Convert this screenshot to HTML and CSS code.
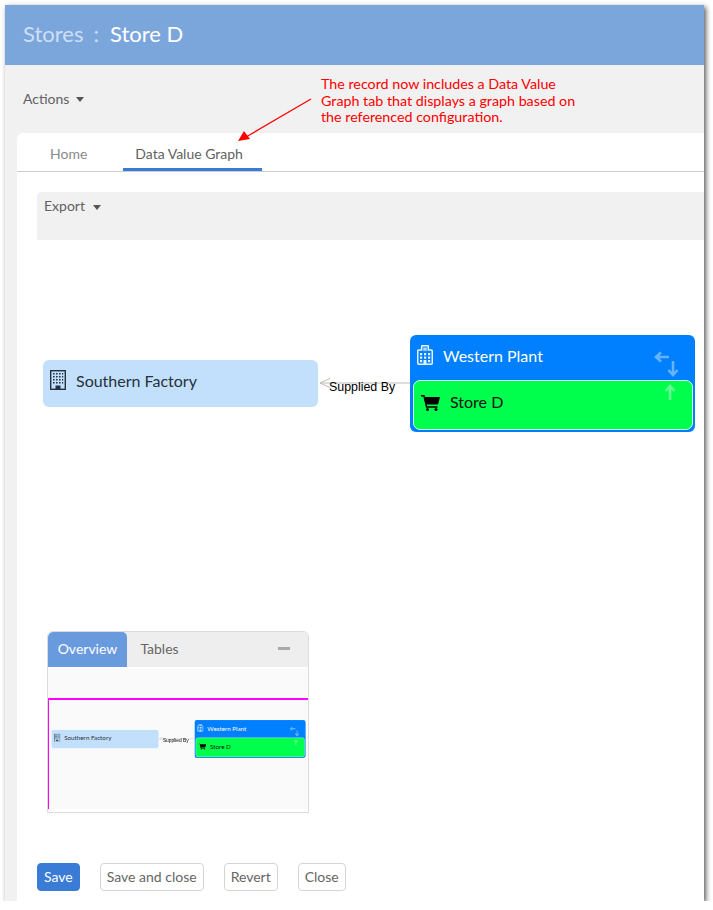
FILE: index.html
```html
<!DOCTYPE html>
<html lang="en">
<head>
<meta charset="UTF-8">
<meta name="viewport" content="width=device-width, initial-scale=1.0">
<title>Stores : Store D</title>
<link rel="stylesheet" href="styles.css">
</head>
<body>
    <svg width="0" height="0" class="defs">
        <defs>
            <symbol id="ico-building" viewBox="0 0 16 20">
                <rect x="0.7" y="0.7" width="14.6" height="18.6" fill="none" stroke="currentColor" stroke-width="1.4"/>
                <path d="M3 3h1.600v1.600H3zM6 3h1.600v1.600H6zM9 3h1.600v1.600H9zM12 3h1.200v1.600H12zM3 6h1.600v1.600H3zM6 6h1.600v1.600H6zM9 6h1.600v1.600H9zM12 6h1.200v1.600H12zM3 9h1.600v1.600H3zM6 9h1.600v1.600H6zM9 9h1.600v1.600H9zM12 9h1.200v1.600H12zM3 12h1.600v1.600H3zM6 12h1.600v1.600H6zM9 12h1.600v1.600H9zM12 12h1.200v1.600H12zM5.500 15.500h5V19h-5z" fill="currentColor"/>
            </symbol>
            <symbol id="ico-hospital" viewBox="0 0 16 20">
                <path d="M4.700 5V1.500q0-.8.8-.8h5q.8 0 .8.800V5h2.700q1.300 0 1.300 1.300v11.400q0 1.600-1.600 1.600H2.300q-1.600 0-1.600-1.600V6.300Q.7 5 2 5z" fill="none" stroke="currentColor" stroke-width="1.600"/>
                <path d="M6.500 2.200h1v1.300h1V2.200h1v4h-1V4.700h-1v1.500h-1zM3 8h2.200v2.200H3zM7 8h2.200v2.200H7zM11 8h2.200v2.200h-2.200zM3 11.500h2.200v2.200H3zM7 11.500h2.200v2.200H7zM11 11.500h2.200v2.200h-2.200zM3 15h2.200v2.200H3zM11 15h2.200v2.200h-2.200zM6.500 15h3v4.500h-3z" fill="currentColor"/>
            </symbol>
            <symbol id="ico-cart" viewBox="0 0 19 16">
                <path d="M0 0h3.400l.6 2H19l-2 7.500H5.800l.4 1.700H16.500v1.500H5L2.300 1.500H0z" fill="currentColor"/>
                <circle cx="6.500" cy="14.500" r="1.500" fill="currentColor"/>
                <circle cx="15" cy="14.500" r="1.500" fill="currentColor"/>
            </symbol>
            <symbol id="ico-left" viewBox="0 0 16 12">
                <path d="M15 6H3M7 1.500 2 6l5 4.500" fill="none" stroke="currentColor" stroke-width="2.600"/>
            </symbol>
            <symbol id="ico-down" viewBox="0 0 12 16">
                <path d="M6 0v13M1.500 9 6 14l4.500-5" fill="none" stroke="currentColor" stroke-width="2.600"/>
            </symbol>
            <symbol id="ico-up" viewBox="0 0 12 16">
                <path d="M6 16V3M1.500 7 6 2l4.500 5" fill="none" stroke="currentColor" stroke-width="2.600"/>
            </symbol>
        </defs>
    </svg>

    <div class="window">
        <div class="header">
            <span class="crumb">Stores</span>
            <span class="crumb sep">:</span>
            <span class="record">Store D</span>
        </div>

        <div class="actions">
            <span class="dropdown">Actions <i class="caret"></i></span>
        </div>

        <div class="card">
            <div class="tabs">
                <a class="tab">Home</a>
                <a class="tab active">Data Value Graph</a>
            </div>

            <div class="content">
                <div class="toolbar">
                    <span class="dropdown">Export <i class="caret wide"></i></span>
                </div>

                <div class="canvas">
                    <div class="graph">
                        <svg class="edge" width="92" height="12" viewBox="0 0 92 12">
                            <path d="M92 6H2M12 1.500 2 6l10 4.500" fill="none" stroke="#bbb" stroke-width="1"/>
                        </svg>
                        <span class="edge-label">Supplied By</span>
                        <div class="node factory">
                            <svg class="node-ico" width="16" height="20"><use href="#ico-building"/></svg>
                            Southern Factory
                        </div>
                        <div class="node plant">
                            <div class="plant-title">
                                <svg class="hosp-ico" width="16" height="20"><use href="#ico-hospital"/></svg>
                                Western Plant
                            </div>
                            <div class="store">
                                <svg class="cart-ico" width="19" height="16"><use href="#ico-cart"/></svg>
                                Store D
                            </div>
                            <svg class="arrow a-left" width="16" height="12"><use href="#ico-left"/></svg>
                            <svg class="arrow a-down" width="12" height="16"><use href="#ico-down"/></svg>
                            <svg class="arrow a-up" width="12" height="16"><use href="#ico-up"/></svg>
                        </div>
                    </div>

                    <div class="minimap">
                        <div class="mini-tabs">
                            <span class="mini-tab on">Overview</span>
                            <span class="mini-tab">Tables</span>
                            <i class="minus"></i>
                        </div>
                        <div class="mini-view">
                            <div class="viewport"></div>
                            <div class="graph small">
                                <svg class="edge" width="92" height="12" viewBox="0 0 92 12">
                                    <path d="M92 6H2M12 1.500 2 6l10 4.500" fill="none" stroke="#bbb" stroke-width="1"/>
                                </svg>
                                <span class="edge-label">Supplied By</span>
                                <div class="node factory">
                                    <svg class="node-ico" width="16" height="20"><use href="#ico-building"/></svg>
                                    Southern Factory
                                </div>
                                <div class="node plant">
                                    <div class="plant-title">
                                        <svg class="hosp-ico" width="16" height="20"><use href="#ico-hospital"/></svg>
                                        Western Plant
                                    </div>
                                    <div class="store">
                                        <svg class="cart-ico" width="19" height="16"><use href="#ico-cart"/></svg>
                                        Store D
                                    </div>
                                    <svg class="arrow a-left" width="16" height="12"><use href="#ico-left"/></svg>
                                    <svg class="arrow a-down" width="12" height="16"><use href="#ico-down"/></svg>
                                    <svg class="arrow a-up" width="12" height="16"><use href="#ico-up"/></svg>
                                </div>
                            </div>
                        </div>
                    </div>
                </div>

                <div class="buttons">
                    <button class="btn primary">Save</button>
                    <button class="btn">Save and close</button>
                    <button class="btn">Revert</button>
                    <button class="btn">Close</button>
                </div>
            </div>
        </div>

        <p class="note">The record now includes a Data Value Graph tab that displays a graph based on the referenced configuration.</p>
        <svg class="note-arrow" width="76" height="46" viewBox="0 0 76 46">
            <path d="M73 1 8 39" stroke="#f00" stroke-width="1.300" fill="none"/>
            <path d="M0 43 6 33l6 8z" fill="#f00"/>
        </svg>
    </div>
</body>
</html>
```

FILE: styles.css
```css
/* Basic styling */
html, body {
    margin: 0;
    padding: 0;
    background-color: #fff;
}
body {
    font-family: Lato, "Open Sans", sans-serif;
    color: #626262;
    overflow: hidden;
}
.defs {
    position: absolute;
}
.window {
    position: relative;
    display: flex;
    flex-direction: column;
    width: 699px;
    height: 896px;
    margin: 5px 0 0 5px;
    background-color: #f1f1f1;
    box-shadow: 2px 2px 5px rgba(0, 0, 0, 0.65);
    overflow: hidden;
}

/* Title bar */
.header {
    display: flex;
    align-items: center;
    gap: 10px;
    height: 60px;
    padding: 0 18px 4px;
    box-sizing: border-box;
    background-color: #7ba6dc;
    font-size: 22px;
}
.crumb {
    color: #cfdff3;
}
.sep {
    margin-right: 1px;
}
.record {
    color: #fff;
}

/* Actions row */
.actions {
    display: flex;
    align-items: center;
    height: 68px;
    padding: 0 0 2px 18px;
    box-sizing: border-box;
}
.dropdown {
    font-size: 14px;
    color: #626262;
}
.caret {
    display: inline-block;
    margin-left: 3px;
    vertical-align: middle;
    border-top: 5px solid #555;
    border-left: 4.5px solid transparent;
    border-right: 4.5px solid transparent;
}
.caret.wide {
    margin-left: 4px;
}

/* Main card */
.card {
    display: flex;
    flex: 1;
    flex-direction: column;
    margin-left: 12px;
    background-color: #fff;
    border-top-left-radius: 6px;
    min-height: 0;
}
.tabs {
    display: flex;
    height: 39px;
    padding-left: 20px;
    box-sizing: border-box;
    border-bottom: 1px solid #ccc;
}
.tab {
    height: 38px;
    padding: 0 13px;
    box-sizing: border-box;
    margin-right: 23px;
    font-size: 14px;
    line-height: 42px;
    color: #8a8a8a;
}
.tab.active {
    padding: 0 19px 0 12px;
    color: #626262;
    border-bottom: 3px solid #3a7bd5;
}
.content {
    display: flex;
    flex: 1;
    flex-direction: column;
    padding: 20px 0 10px 20px;
    min-height: 0;
}
.toolbar {
    height: 48px;
    padding: 3px 7px;
    box-sizing: border-box;
    background-color: #f1f1f1;
    border-top-left-radius: 5px;
}

/* Graph area, nodes are placed freely on it */
.canvas {
    position: relative;
    flex: 1;
    min-height: 0;
}
.graph {
    position: absolute;
    left: 0;
    top: 0;
    width: 667px;
    height: 300px;
}
.node {
    position: absolute;
    box-sizing: border-box;
    border-radius: 6px;
    font-size: 16px;
}
.factory {
    left: 6px;
    top: 120px;
    width: 275px;
    height: 47px;
    padding: 11px 0 0 33px;
    background-color: #c2e0fc;
    color: #27313d;
}
.node-ico {
    position: absolute;
    left: 7px;
    top: 10px;
    color: #27313d;
}
.plant {
    left: 373px;
    top: 95px;
    width: 285px;
    height: 97px;
    background-color: #0080ff;
    color: #fff;
}
.plant-title {
    height: 45px;
    padding: 11px 0 0 33px;
    box-sizing: border-box;
}
.hosp-ico {
    position: absolute;
    left: 7px;
    top: 10px;
    color: #e4f1ff;
}
.store {
    position: relative;
    height: 50px;
    margin: 0 2px 0 3px;
    padding: 11px 0 0 36px;
    box-sizing: border-box;
    background-color: #00ff4c;
    border: 1px solid #d8fbe6;
    border-radius: 7px;
    color: #111;
}
.cart-ico {
    position: absolute;
    left: 7px;
    top: 14px;
    color: #000;
}
.arrow {
    position: absolute;
}
.a-left {
    left: 244px;
    top: 16px;
    color: #66b3ff;
}
.a-down {
    left: 257px;
    top: 26px;
    color: #66b3ff;
}
.a-up {
    left: 254px;
    top: 49px;
    color: #66ff94;
}
.edge {
    position: absolute;
    left: 281px;
    top: 137px;
}
.edge-label {
    position: absolute;
    left: 292px;
    top: 140px;
    font-family: "Liberation Sans", Arial, sans-serif;
    font-size: 12.400px;
    line-height: 14px;
    color: #000;
    white-space: nowrap;
}

/* Overview panel over the graph */
.minimap {
    position: absolute;
    left: 10px;
    top: 391px;
    width: 262px;
    height: 182px;
    box-sizing: border-box;
    border: 1px solid #dcdcdc;
    border-top-left-radius: 6px;
    border-top-right-radius: 6px;
    background-color: #fff;
    overflow: hidden;
}
.mini-tabs {
    display: flex;
    position: relative;
    height: 35px;
    background-color: #eee;
}
.mini-tab {
    width: 79px;
    padding-bottom: 1px;
    box-sizing: border-box;
    font-size: 14px;
    line-height: 33px;
    text-align: center;
    color: #666;
}
.mini-tab.on {
    background-color: #6a9ade;
    color: #fff;
    border-top-left-radius: 5px;
    border-top-right-radius: 5px;
}
.mini-tab + .mini-tab {
    width: 65px;
}
.minus {
    position: absolute;
    right: 18px;
    top: 15px;
    width: 12px;
    height: 3px;
    background-color: #aaa;
}
.mini-view {
    position: relative;
    height: 140px;
    margin-top: 2px;
    background-color: #fafafa;
    overflow: hidden;
}
.viewport {
    position: absolute;
    left: 0;
    top: 29px;
    width: 300px;
    height: 200px;
    border-top: 2px solid #f0f;
    border-left: 1px solid #f0f;
}
.graph.small {
    left: 1px;
    top: 14px;
    transform: scale(0.39);
    transform-origin: 0 0;
    filter: blur(0.6px);
}

/* Bottom buttons */
.buttons {
    display: flex;
    gap: 20px;
    height: 28px;
}
.btn {
    height: 28px;
    padding: 0 6px 2px;
    font-family: Lato, sans-serif;
    font-size: 14px;
    color: #666;
    background-color: #fff;
    border: 1px solid #d5d5d5;
    border-radius: 4px;
}
.btn.primary {
    padding: 0 6px 2px;
    color: #fff;
    background-color: #3a7bd5;
    border-color: #3a7bd5;
}

/* Red callout on the screenshot */
.note {
    position: absolute;
    left: 316px;
    top: 71px;
    width: 270px;
    margin: 0;
    font-size: 14.280px;
    line-height: 16.500px;
    color: #f00;
}
.note-arrow {
    position: absolute;
    left: 233px;
    top: 93px;
}
```
